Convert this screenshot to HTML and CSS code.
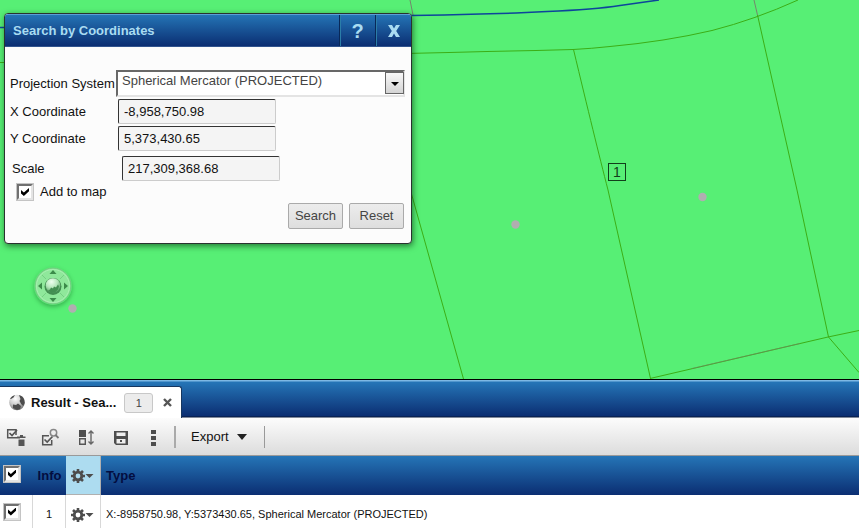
FILE: index.html
```
<!DOCTYPE html>
<html lang="en">
<head>
<meta charset="utf-8">
<title>Search by Coordinates</title>
<link rel="stylesheet" href="styles.css">
</head>
<body>
<main class="map">
  <svg class="map-lines" aria-hidden="true">
    <g class="parcel">
      <path d="M0 62.500H10M405 53.500L449 52.500L487 51.500L536 50.500L573 49.500Q592 48.500 610 46.500Q665 41.500 712 30.500Q755 19.500 798 0"/>
      <path d="M573.500 49.500C588 110 599 155 608 190L650.500 378.500"/>
      <path d="M757.500 15L797 190L828.500 337L859 372.500"/>
      <path d="M411.500 194L463.500 379"/>
      <path d="M650 378.500L828 337L859 330.500"/>
    </g>
    <g class="road">
      <path d="M410 0L413 15M754 0L757.500 15"/>
      <path d="M692 368.500L720 362L800 343.500" opacity=".6"/>
    </g>
    <path class="river" d="M0 27.500H10M411 15.500L444 15L480 14L516 13L547 11.500Q595 9.500 620 5.500L659 0"/>
    <g class="node"><circle cx="515.500" cy="224.500" r="4.200"/><circle cx="702.500" cy="197" r="4.200"/><circle cx="72.500" cy="308.500" r="4.200"/></g>
  </svg>
  <span class="marker">1</span>
  <button class="pan" aria-label="Pan the map">
    <svg width="38" height="38" viewBox="0 0 38 38">
      <defs><radialGradient id="globe" cx=".4" cy=".25" r=".8"><stop offset="0" stop-color="#effff0"/><stop offset=".5" stop-color="#b5e7bb"/><stop offset="1" stop-color="#4c9a5a"/></radialGradient></defs>
      <circle cx="19" cy="19" r="18" fill="#8fe89b" stroke="#70c87e"/>
      <circle cx="19" cy="19" r="16.500" fill="none" stroke="#a7efb0"/>
      <path d="M8 8l4 4M30 8l-4 4M8 30l4-4M30 30l-4-4" stroke="#75d083"/>
      <path d="M19 3l3.500 4h-7zM19 35l3.500-4h-7zM4 19l4-3.500v7zM34 19l-4-3.500v7z" fill="#3c8b4a"/>
      <circle cx="19" cy="19.500" r="8.500" fill="#438e51"/>
      <circle cx="19" cy="18.500" r="7.300" fill="url(#globe)"/>
      <path d="M14 23.500l2-1 1-2 2 1 1-2 2 1 2-3 1 2-1 3-3 3-4 .5z" fill="#438e51"/>
    </svg>
  </button>

  <section class="dialog" aria-labelledby="dialog-title">
    <header class="dialog-head">
      <h1 id="dialog-title">Search by Coordinates</h1>
      <button aria-label="Help">?</button>
      <button aria-label="Close"><svg width="12" height="12" viewBox="0 0 12 12"><path d="M0 0h4l2 3.500L8 0h4L8.200 6 12 12H8L6 8.500 4 12H0l3.800-6z" fill="#a9dcf2"/></svg></button>
    </header>
    <form class="dialog-form">
      <div class="field projection">
        <label for="projection">Projection System</label>
        <div class="select">
          <select id="projection"><option>Spherical Mercator (PROJECTED)</option></select>
          <span class="arrow" aria-hidden="true"></span>
        </div>
      </div>
      <div class="field"><label for="x">X Coordinate</label><input id="x" type="text" value="-8,958,750.98"></div>
      <div class="field"><label for="y">Y Coordinate</label><input id="y" type="text" value="5,373,430.65"></div>
      <div class="field scale"><label for="scale">Scale</label><input id="scale" type="text" value="217,309,368.68"></div>
      <label class="add"><input class="check" type="checkbox" checked>Add to map</label>
      <div class="actions"><button type="button">Search</button><button type="button">Reset</button></div>
    </form>
  </section>
</main>

<section class="results">
  <div class="tabs">
    <div class="tab">
      <svg width="18" height="18" viewBox="0 0 18 18" aria-hidden="true">
        <defs><radialGradient id="ball" cx=".4" cy=".25" r=".8"><stop offset="0" stop-color="#fff"/><stop offset=".5" stop-color="#ccc"/><stop offset="1" stop-color="#666"/></radialGradient></defs>
        <circle cx="9" cy="8.500" r="7.800" fill="url(#ball)"/>
        <path d="M2 4.500Q4 1.500 7 1L5.500 3.500 3 5zM11 1q4 1 5 4l.7 4-1.500 3-2-2-1.700-3 1-2zM5 10.500l3 .5 2-1.500 3 2.500-1 3-3 1-4-2z" fill="#4d4d4d"/>
      </svg>
      <strong>Result - Sea...</strong>
      <span class="count">1</span>
      <button class="tab-close" aria-label="Close tab"><svg width="9" height="9" viewBox="0 0 9 9"><path d="M1 1l7 7M8 1L1 8" stroke="#555" stroke-width="2.400"/></svg></button>
    </div>
  </div>

  <div class="toolbar">
    <div class="tools">
      <button aria-label="Remove selected"><svg width="20" height="18" viewBox="0 0 20 18"><path d="M10 7V1.700H1.700v8H14" fill="none" stroke="#555" stroke-width="1.500"/><path d="M3.500 5l2.500 2.500L11 2" fill="none" stroke="#555" stroke-width="1.700"/><path d="M11 8.500h3V7h3v1.500h2.500V10H11zM12.500 11.500h6V18h-6z" fill="#555"/></svg></button>
      <button aria-label="Zoom to selected"><svg width="20" height="18" viewBox="0 0 20 18"><path d="M8 7.700H1.700v9h9V12" fill="none" stroke="#555" stroke-width="1.500"/><path d="M3.500 11.500L6.200 14l5.300-5.500" fill="none" stroke="#555" stroke-width="1.700"/><circle cx="12.500" cy="4.800" r="3.200" fill="none" stroke="#888" stroke-width="1.500"/><path d="M14.500 7l3 3" stroke="#777" stroke-width="1.800"/></svg></button>
      <button aria-label="Sort"><svg width="20" height="18" viewBox="0 0 20 18"><path d="M3 2h7v7H3z" fill="#4d4d4d"/><path d="M3.700 10.700h5.600v5.600H3.700z" fill="none" stroke="#555" stroke-width="1.400"/><path d="M15 3v13M12.500 5.500L15 3 17.500 5.500M12.500 13.500L15 16l2.500-2.500" fill="none" stroke="#666" stroke-width="1.400"/></svg></button>
      <button aria-label="Save"><svg width="20" height="18" viewBox="0 0 20 18"><path d="M3 3h14v14H5l-2-2z" fill="#4d4d4d"/><path d="M5.500 4.500h9V8h-9zM5.500 11h9v4.500h-9z" fill="#eee"/><path d="M9 12h2v2H9z" fill="#4d4d4d"/></svg></button>
      <button aria-label="More"><svg width="18" height="18" viewBox="0 0 18 18"><path d="M5 2h5v4H5zM5 8h5v4H5zM5 14h5v4H5z" fill="#4d4d4d"/></svg></button>
    </div>
    <button class="export">Export <span class="caret" aria-hidden="true"></span></button>
  </div>

  <table>
    <colgroup><col class="c-check"><col class="c-info"><col class="c-gear"><col></colgroup>
    <thead>
      <tr>
        <th><input class="check" type="checkbox" checked aria-label="Select all"></th>
        <th>Info</th>
        <th class="gear-cell"><button class="gear" aria-label="Column options"><svg width="24" height="14" viewBox="0 0 24 14"><g fill="none" stroke="#4d4d4d"><circle cx="7" cy="7" r="3.800" stroke-width="2.800"/><path d="M7 0v3M7 11v3M0 7h3M11 7h3M2 2l2.200 2.200M9.800 9.800L12 12M12 2L9.800 4.200M4.200 9.800L2 12" stroke-width="2.600"/></g><path d="M14.500 5h8l-4 4z" fill="#4d4d4d"/></svg></button></th>
        <th class="type">Type</th>
      </tr>
    </thead>
    <tbody>
      <tr>
        <td><input class="check" type="checkbox" checked aria-label="Select row 1"></td>
        <td>1</td>
        <td><button class="gear" aria-label="Row options"><svg width="24" height="14" viewBox="0 0 24 14"><g fill="none" stroke="#4d4d4d"><circle cx="7" cy="7" r="3.800" stroke-width="2.800"/><path d="M7 0v3M7 11v3M0 7h3M11 7h3M2 2l2.200 2.200M9.800 9.800L12 12M12 2L9.800 4.200M4.200 9.800L2 12" stroke-width="2.600"/></g><path d="M14.500 5h8l-4 4z" fill="#4d4d4d"/></svg></button></td>
        <td class="type">X:-8958750.98, Y:5373430.65, Spherical Mercator (PROJECTED)</td>
      </tr>
    </tbody>
  </table>
</section>
</body>
</html>
```
FILE: styles.css
```
* { box-sizing: border-box; }

body {
  margin: 0;
  height: 100vh;
  display: flex;
  flex-direction: column;
  overflow: hidden;
  font: 13px/16px "Liberation Sans", Arial, sans-serif;
  color: #111;
}

button, input, select { font: inherit; color: inherit; margin: 0; }
button { border: 0; padding: 0; background: none; }
svg { display: block; }

/* Map */
.map { flex: 1; min-height: 0; position: relative; overflow: hidden; background: #57ef75; }
.map-lines { width: 100%; height: 100%; fill: none; stroke-width: 1; }
.parcel { stroke: #3cae16; }
.road { stroke: #74866c; }
.river { stroke: #0d459b; stroke-width: 1.500; }
.node { fill: #b0aeb0; }

.marker {
  position: absolute;
  left: 608px;
  top: 163px;
  width: 18px;
  height: 18px;
  border: 1px solid #123f1b;
  color: #123f1b;
  font-size: 14px;
  text-align: center;
}

.pan { position: absolute; left: 34px; top: 267px; border-radius: 50%; box-shadow: 0 2px 4px rgba(0, 70, 15, .35); }

/* Dialog */
.dialog {
  position: absolute;
  left: 4px;
  top: 13px;
  width: 408px;
  border: 1px solid #29332f;
  border-radius: 4px;
  background: #fcfcfc;
  box-shadow: 1px 2px 6px rgba(0, 40, 10, .6);
  overflow: hidden;
}

.dialog-head {
  display: flex;
  height: 33px;
  border-top: 1px solid #5a9fd6;
  border-bottom: 1px solid #31548e;
  background: linear-gradient(#2474b5, #0b2e72);
  color: #a9dcf2;
}

.dialog-head h1 { flex: 1; margin: 0; padding-left: 8px; font-size: 13px; line-height: 31px; }
.dialog-head button {
  width: 36px;
  display: flex;
  align-items: center;
  justify-content: center;
  border-left: 1px solid #082858;
  box-shadow: inset 1px 0 #2b7da8;
  font-size: 20px;
  font-weight: bold;
}

.dialog-form { padding: 23px 6px 14px 5px; display: flex; flex-direction: column; gap: 2px; }
.field { display: flex; align-items: center; }
.field label { width: 108px; white-space: nowrap; }
.field input {
  width: 158px;
  height: 25px;
  padding: 0 5px;
  border: 1px solid #ccc;
  border-top-color: #333;
  border-left-color: #333;
  border-radius: 2px;
  background: #f4f4f4;
}
.projection label { width: 106px; }
.scale { padding: 3px 0 0 2px; }
.scale label { width: 110px; }

.select {
  flex: 1;
  position: relative;
  height: 27px;
  border: 2px solid #e4e4e4;
  border-top-color: #686868;
  border-left-color: #686868;
  background: #fff;
}
.select select {
  appearance: none;
  width: 100%;
  height: 20px;
  padding: 0 24px 2px 4px;
  border: 0;
  background: none;
  color: #444;
}
.arrow {
  position: absolute;
  top: 0;
  right: -1px;
  width: 19px;
  height: 22px;
  border: 1px solid #666;
  background: linear-gradient(#f8f8f8, #d4d4d4);
  pointer-events: none;
}
.arrow::after {
  content: "";
  position: absolute;
  left: 5px;
  top: 9px;
  border: 4px solid transparent;
  border-top-color: #000;
  border-bottom: 0;
}

.check {
  appearance: none;
  display: block;
  width: 16px;
  height: 16px;
  border: 2px solid #e4e4e4;
  border-top-color: #707070;
  border-left-color: #707070;
  background: #fff;
  outline: 1px solid #c4c4c4;
}
.check:checked::after {
  content: "";
  display: block;
  width: 8px;
  height: 8px;
  margin: 2px;
  background: #000;
  clip-path: polygon(0 25%, 36% 55%, 100% 0, 100% 42%, 36% 100%, 0 70%);
}
.add { display: flex; align-items: center; gap: 7px; padding-left: 12px; height: 18px; width: 120px; margin-left: -5px; }
.add { margin-left: 0; padding-left: 7px; }

.actions { display: flex; justify-content: flex-end; gap: 6px; padding-right: 1px; }
.actions button {
  min-width: 55px;
  height: 26px;
  padding: 0 5px;
  border: 1px solid #aaa;
  border-radius: 2px;
  background: linear-gradient(#ececec, #dedede);
  color: #444;
}

/* Results */
.tabs {
  height: 39px;
  display: flex;
  align-items: flex-end;
  border-top: 1px solid #000;
  background: linear-gradient(#7db8e4 1px, #2575b7 2px, #0b2e72 36px, #051638 37px, #fcfcfc 38px);
}
.tab {
  display: flex;
  align-items: center;
  height: 32px;
  padding: 0 9px 0 8px;
  border-top: 1px solid #16365f;
  border-right: 1px solid #16365f;
  border-radius: 0 3px 0 0;
  background: #fff;
}
.tab strong { margin: 0 8px 0 5px; }
.count {
  width: 29px;
  height: 20px;
  border: 1px solid #c8c8c8;
  border-radius: 3px;
  background: #ececec;
  color: #444;
  font-size: 11px;
  line-height: 18px;
  text-align: center;
}
.tab-close { margin-left: 10px; }

.toolbar {
  height: 38px;
  display: flex;
  align-items: center;
  border-bottom: 1px solid #999;
  background: linear-gradient(#fcfcfc, #dcdcdc);
}
.tools { display: flex; gap: 15px; padding: 0 10px 0 6px; border-right: 2px solid #aaa; height: 22px; align-items: center; }
.export { display: flex; align-items: center; gap: 8px; height: 22px; padding: 0 17px 0 15px; border-right: 1px solid #999; }
.caret { border: 5px solid transparent; border-top: 6px solid #222; border-bottom: 0; }

table { width: 100%; table-layout: fixed; border-collapse: separate; border-spacing: 0; }
.c-check { width: 33px; }
.c-info { width: 33px; }
.c-gear { width: 35px; }
th, td { padding: 0; text-align: center; }
thead tr { height: 39px; background: linear-gradient(#2575b7, #0b2e72); color: #030d40; }
tbody tr { height: 33px; background: #fff; font-size: 11px; }
td { padding-top: 4px; border-right: 1px solid #d8d8d8; }
th .check, td .check { margin-left: 4px; margin-bottom: 4px; }
.gear-cell { background: #addcf0; border-right: 1px solid #b0b0b0; border-bottom: 1px solid #b0b0b0; }
.gear { display: inline-block; vertical-align: middle; }
.type { padding-left: 5px; text-align: left; border-right: 0; }
```
